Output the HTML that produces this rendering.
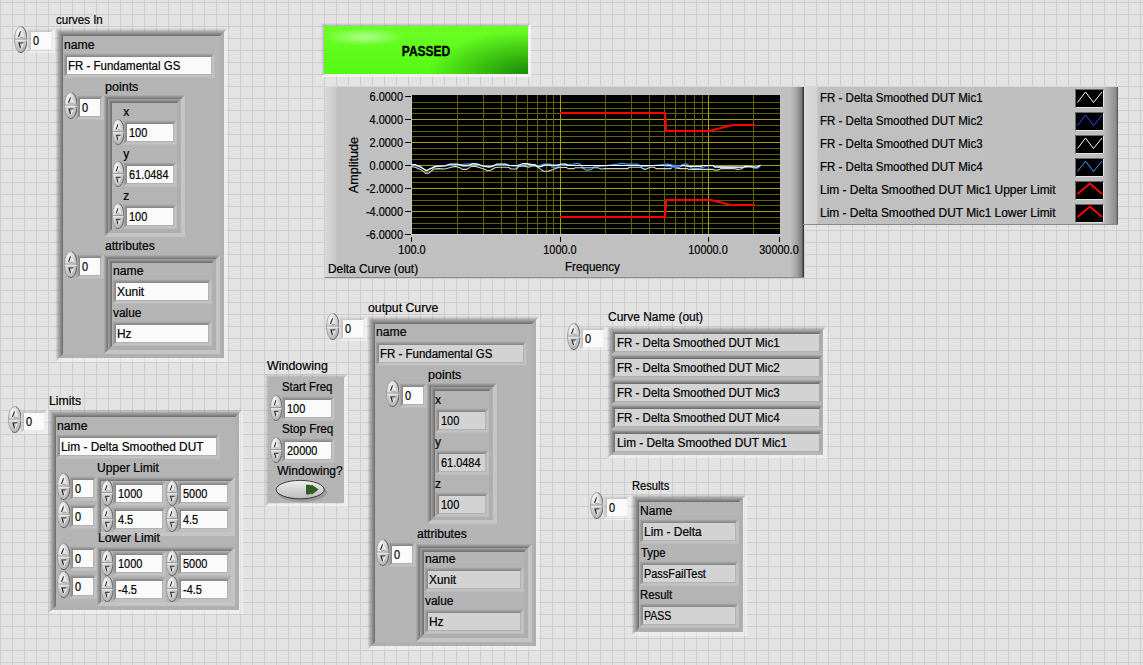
<!DOCTYPE html><html><head><meta charset="utf-8"><style>
html,body{margin:0;padding:0}
body{width:1143px;height:665px;overflow:hidden;position:relative;background-color:#e3e3e3;
background-image:linear-gradient(to right,#cdcdcd 1px,transparent 1px),linear-gradient(to bottom,#cdcdcd 1px,transparent 1px);
background-size:12px 12px;background-position:0 2px;font-family:"Liberation Sans",sans-serif;}
.a{position:absolute;box-sizing:border-box}
.b{position:absolute;left:0;top:0;right:0;bottom:0;border:1px solid transparent;box-sizing:border-box}
.f{position:absolute;left:0;top:0;right:0;bottom:0}
.t{position:absolute;font-size:12px;line-height:14px;white-space:pre;color:#000;-webkit-text-stroke:0.2px #000}
</style></head><body>
<svg width="0" height="0" style="position:absolute"><defs>
<radialGradient id="sg" cx="0.32" cy="0.22" r="0.9"><stop offset="0" stop-color="#f8f8f8"/><stop offset="0.35" stop-color="#dadada"/><stop offset="0.8" stop-color="#bcbcbc"/><stop offset="1" stop-color="#a0a0a0"/></radialGradient>
<linearGradient id="so" x1="0" y1="0" x2="1" y2="1"><stop offset="0" stop-color="#b0b0b0"/><stop offset="0.5" stop-color="#707070"/><stop offset="1" stop-color="#1a1a1a"/></linearGradient>
<g id="spin"><ellipse cx="6" cy="13" rx="5.6" ry="12.6" fill="url(#sg)" stroke="#8c8c8c" stroke-width="0.6"/>
<polyline points="7.45,0.83 7.92,1.16 8.37,1.58 8.80,2.09 9.21,2.68 9.60,3.35 9.96,4.09 10.29,4.90 10.59,5.77 10.85,6.70 11.08,7.68 11.26,8.69 11.41,9.74 11.51,10.81 11.58,11.90 11.60,13.00 11.58,14.10 11.51,15.19 11.41,16.26 11.26,17.31 11.08,18.32 10.85,19.30 10.59,20.23 10.29,21.10 9.96,21.91 9.60,22.65 9.21,23.32 8.80,23.91 8.37,24.42 7.92,24.84 7.45,25.17 6.97,25.41 6.49,25.55 6.00,25.60 5.51,25.55 5.03,25.41 4.55,25.17 4.08,24.84 3.63,24.42 3.20,23.91" fill="none" stroke="#3a3a3a" stroke-width="0.85" stroke-opacity="0.85" stroke-dasharray="1.5 0.6"/>
<path d="M0.6 12.6H11.4" stroke="#8e8e8e" stroke-width="0.9"/><path d="M0.8 13.7H11.2" stroke="#ececec" stroke-width="0.9"/>
<path d="M4 10.4L5.9 5" stroke="#1a1a1a" stroke-width="0.95"/><path d="M6.1 5.2L8.4 10.4" stroke="#f2f2f2" stroke-width="0.9"/><path d="M4.6 11H8.2" stroke="#9a9a9a" stroke-width="0.7"/>
<path d="M3.8 16.3H8.3" stroke="#1a1a1a" stroke-width="0.9"/><path d="M4.5 16.6L5.8 21.4" stroke="#1a1a1a" stroke-width="0.95"/><path d="M8.2 16.9L6.2 21.6" stroke="#f2f2f2" stroke-width="0.9"/></g>
</defs></svg>

<div class="t" style="left:55.5px;top:13.0px;transform:scaleX(0.96);transform-origin:left center;">curves In</div>
<svg class="a" style="left:13.5px;top:26px;z-index:2" width="13.5" height="27" viewBox="0 0 12 26" preserveAspectRatio="none"><use href="#spin"/></svg>
<div class="a" style="left:27px;top:28px;width:28px;height:25px"><div class="b" style="border-color:rgba(0,0,0,0.0) rgba(255,255,255,0.42) rgba(255,255,255,0.3) rgba(0,0,0,0.02)"><div class="b" style="border-color:rgba(0,0,0,0.04) rgba(255,255,255,0.42) rgba(255,255,255,0.3) rgba(0,0,0,0.06)"><div class="b" style="border-color:rgba(0,0,0,0.08) rgba(255,255,255,0.42) rgba(255,255,255,0.3) rgba(0,0,0,0.1)"><div class="b" style="border-color:rgba(0,0,0,0.12) rgba(255,255,255,0.42) rgba(255,255,255,0.3) rgba(0,0,0,0.14)"><div class="f" style="background:#fafafa"></div></div></div></div></div></div>
<div class="t" style="left:32.9px;top:33.8px;transform:scaleX(0.91);transform-origin:left center;">0</div>
<div class="a" style="left:55px;top:28px;width:173px;height:334px"><div class="b" style="border-color:rgba(0,0,0,0.02) rgba(255,255,255,0.36) rgba(255,255,255,0.36) rgba(0,0,0,0.02)"><div class="b" style="border-color:rgba(0,0,0,0.09) rgba(255,255,255,0.36) rgba(255,255,255,0.36) rgba(0,0,0,0.09)"><div class="b" style="border-color:rgba(0,0,0,0.17) rgba(255,255,255,0.36) rgba(255,255,255,0.36) rgba(0,0,0,0.17)"><div class="b" style="border-color:rgba(0,0,0,0.25) rgba(255,255,255,0.36) rgba(255,255,255,0.36) rgba(0,0,0,0.25)"><div class="b" style="background:#b4b4b4;border-color:rgba(0,0,0,.12) rgba(0,0,0,0.025) rgba(0,0,0,0.025) rgba(0,0,0,.12)"><div class="b" style="border-color:rgba(0,0,0,.2) rgba(0,0,0,0.025) rgba(0,0,0,0.025) rgba(0,0,0,.2)"><div class="b" style="border-color:rgba(0,0,0,.28) rgba(0,0,0,0.025) rgba(0,0,0,0.025) rgba(0,0,0,.28)"><div class="b" style="border-color:rgba(0,0,0,.37) rgba(0,0,0,0.025) rgba(0,0,0,0.025) rgba(0,0,0,.37)"><div class="f" style="background:#b4b4b4"></div></div></div></div></div></div></div></div></div></div>
<div class="t" style="left:63.7px;top:37.8px;transform:scaleX(1.016);transform-origin:left center;">name</div>
<div class="a" style="left:63px;top:53px;width:152px;height:25px"><div class="b" style="border-color:#b0b0b0 #bcbcbc #bcbcbc #b0b0b0"><div class="b" style="border-color:#a2a2a2 #c2c2c2 #c2c2c2 #a2a2a2"><div class="b" style="border-color:#959595 #c0c0c0 #c0c0c0 #959595"><div class="b" style="border-color:#898989 #b2b2b2 #b2b2b2 #898989"><div class="f" style="background:#fafafa"></div></div></div></div></div></div>
<div class="t" style="left:68.3px;top:58.8px;transform:scaleX(0.957);transform-origin:left center;">FR - Fundamental GS</div>
<div class="t" style="left:104.7px;top:79.8px;transform:scaleX(1.042);transform-origin:left center;">points</div>
<svg class="a" style="left:63.5px;top:92px;z-index:2" width="13.5" height="27" viewBox="0 0 12 26" preserveAspectRatio="none"><use href="#spin"/></svg>
<div class="a" style="left:76px;top:95px;width:28px;height:25px"><div class="b" style="border-color:#b0b0b0 #bcbcbc #bcbcbc #b0b0b0"><div class="b" style="border-color:#a2a2a2 #c2c2c2 #c2c2c2 #a2a2a2"><div class="b" style="border-color:#959595 #c0c0c0 #c0c0c0 #959595"><div class="b" style="border-color:#898989 #b2b2b2 #b2b2b2 #898989"><div class="f" style="background:#fafafa"></div></div></div></div></div></div>
<div class="t" style="left:81.9px;top:100.8px;transform:scaleX(0.91);transform-origin:left center;">0</div>
<div class="a" style="left:104px;top:95px;width:81px;height:142px"><div class="b" style="border-color:rgba(0,0,0,0.06) rgba(255,255,255,0.22) rgba(255,255,255,0.22) rgba(0,0,0,0.06)"><div class="b" style="border-color:rgba(0,0,0,0.14) rgba(255,255,255,0.22) rgba(255,255,255,0.22) rgba(0,0,0,0.14)"><div class="b" style="border-color:rgba(0,0,0,0.23) rgba(255,255,255,0.22) rgba(255,255,255,0.22) rgba(0,0,0,0.23)"><div class="b" style="border-color:rgba(0,0,0,0.32) rgba(255,255,255,0.22) rgba(255,255,255,0.22) rgba(0,0,0,0.32)"><div class="b" style="background:#b4b4b4;border-color:rgba(0,0,0,.12) rgba(0,0,0,0.025) rgba(0,0,0,0.025) rgba(0,0,0,.12)"><div class="b" style="border-color:rgba(0,0,0,.2) rgba(0,0,0,0.025) rgba(0,0,0,0.025) rgba(0,0,0,.2)"><div class="b" style="border-color:rgba(0,0,0,.28) rgba(0,0,0,0.025) rgba(0,0,0,0.025) rgba(0,0,0,.28)"><div class="b" style="border-color:rgba(0,0,0,.37) rgba(0,0,0,0.025) rgba(0,0,0,0.025) rgba(0,0,0,.37)"><div class="f" style="background:#b4b4b4"></div></div></div></div></div></div></div></div></div></div>
<div class="t" style="left:123.2px;top:104.8px;">x</div>
<svg class="a" style="left:111.8px;top:119px;z-index:2" width="12.4" height="26" viewBox="0 0 12 26" preserveAspectRatio="none"><use href="#spin"/></svg>
<div class="a" style="left:123px;top:120px;width:54px;height:25px"><div class="b" style="border-color:#b0b0b0 #bcbcbc #bcbcbc #b0b0b0"><div class="b" style="border-color:#a2a2a2 #c2c2c2 #c2c2c2 #a2a2a2"><div class="b" style="border-color:#959595 #c0c0c0 #c0c0c0 #959595"><div class="b" style="border-color:#898989 #b2b2b2 #b2b2b2 #898989"><div class="f" style="background:#fafafa"></div></div></div></div></div></div>
<div class="t" style="left:128.9px;top:125.8px;transform:scaleX(0.91);transform-origin:left center;">100</div>
<div class="t" style="left:123.2px;top:146.8px;">y</div>
<svg class="a" style="left:111.8px;top:161px;z-index:2" width="12.4" height="26" viewBox="0 0 12 26" preserveAspectRatio="none"><use href="#spin"/></svg>
<div class="a" style="left:123px;top:162px;width:54px;height:25px"><div class="b" style="border-color:#b0b0b0 #bcbcbc #bcbcbc #b0b0b0"><div class="b" style="border-color:#a2a2a2 #c2c2c2 #c2c2c2 #a2a2a2"><div class="b" style="border-color:#959595 #c0c0c0 #c0c0c0 #959595"><div class="b" style="border-color:#898989 #b2b2b2 #b2b2b2 #898989"><div class="f" style="background:#fafafa"></div></div></div></div></div></div>
<div class="t" style="left:128.9px;top:167.8px;transform:scaleX(0.91);transform-origin:left center;">61.0484</div>
<div class="t" style="left:123.2px;top:188.8px;">z</div>
<svg class="a" style="left:111.8px;top:203px;z-index:2" width="12.4" height="26" viewBox="0 0 12 26" preserveAspectRatio="none"><use href="#spin"/></svg>
<div class="a" style="left:123px;top:204px;width:54px;height:25px"><div class="b" style="border-color:#b0b0b0 #bcbcbc #bcbcbc #b0b0b0"><div class="b" style="border-color:#a2a2a2 #c2c2c2 #c2c2c2 #a2a2a2"><div class="b" style="border-color:#959595 #c0c0c0 #c0c0c0 #959595"><div class="b" style="border-color:#898989 #b2b2b2 #b2b2b2 #898989"><div class="f" style="background:#fafafa"></div></div></div></div></div></div>
<div class="t" style="left:128.9px;top:209.8px;transform:scaleX(0.91);transform-origin:left center;">100</div>
<div class="t" style="left:104.7px;top:239.4px;transform:scaleX(1.008);transform-origin:left center;">attributes</div>
<svg class="a" style="left:63.5px;top:251px;z-index:2" width="13.5" height="27" viewBox="0 0 12 26" preserveAspectRatio="none"><use href="#spin"/></svg>
<div class="a" style="left:76px;top:254px;width:28px;height:25px"><div class="b" style="border-color:#b0b0b0 #bcbcbc #bcbcbc #b0b0b0"><div class="b" style="border-color:#a2a2a2 #c2c2c2 #c2c2c2 #a2a2a2"><div class="b" style="border-color:#959595 #c0c0c0 #c0c0c0 #959595"><div class="b" style="border-color:#898989 #b2b2b2 #b2b2b2 #898989"><div class="f" style="background:#fafafa"></div></div></div></div></div></div>
<div class="t" style="left:81.9px;top:259.8px;transform:scaleX(0.91);transform-origin:left center;">0</div>
<div class="a" style="left:104px;top:255px;width:116px;height:99px"><div class="b" style="border-color:rgba(0,0,0,0.06) rgba(255,255,255,0.22) rgba(255,255,255,0.22) rgba(0,0,0,0.06)"><div class="b" style="border-color:rgba(0,0,0,0.14) rgba(255,255,255,0.22) rgba(255,255,255,0.22) rgba(0,0,0,0.14)"><div class="b" style="border-color:rgba(0,0,0,0.23) rgba(255,255,255,0.22) rgba(255,255,255,0.22) rgba(0,0,0,0.23)"><div class="b" style="border-color:rgba(0,0,0,0.32) rgba(255,255,255,0.22) rgba(255,255,255,0.22) rgba(0,0,0,0.32)"><div class="b" style="background:#b4b4b4;border-color:rgba(0,0,0,.12) rgba(0,0,0,0.025) rgba(0,0,0,0.025) rgba(0,0,0,.12)"><div class="b" style="border-color:rgba(0,0,0,.2) rgba(0,0,0,0.025) rgba(0,0,0,0.025) rgba(0,0,0,.2)"><div class="b" style="border-color:rgba(0,0,0,.28) rgba(0,0,0,0.025) rgba(0,0,0,0.025) rgba(0,0,0,.28)"><div class="b" style="border-color:rgba(0,0,0,.37) rgba(0,0,0,0.025) rgba(0,0,0,0.025) rgba(0,0,0,.37)"><div class="f" style="background:#b4b4b4"></div></div></div></div></div></div></div></div></div></div>
<div class="t" style="left:113.0px;top:264.1px;transform:scaleX(1.016);transform-origin:left center;">name</div>
<div class="a" style="left:112px;top:279px;width:100px;height:25px"><div class="b" style="border-color:#b0b0b0 #bcbcbc #bcbcbc #b0b0b0"><div class="b" style="border-color:#a2a2a2 #c2c2c2 #c2c2c2 #a2a2a2"><div class="b" style="border-color:#959595 #c0c0c0 #c0c0c0 #959595"><div class="b" style="border-color:#898989 #b2b2b2 #b2b2b2 #898989"><div class="f" style="background:#fafafa"></div></div></div></div></div></div>
<div class="t" style="left:117.3px;top:284.8px;transform:scaleX(0.993);transform-origin:left center;">Xunit</div>
<div class="t" style="left:112.6px;top:306.4px;transform:scaleX(0.993);transform-origin:left center;">value</div>
<div class="a" style="left:112px;top:321px;width:100px;height:25px"><div class="b" style="border-color:#b0b0b0 #bcbcbc #bcbcbc #b0b0b0"><div class="b" style="border-color:#a2a2a2 #c2c2c2 #c2c2c2 #a2a2a2"><div class="b" style="border-color:#959595 #c0c0c0 #c0c0c0 #959595"><div class="b" style="border-color:#898989 #b2b2b2 #b2b2b2 #898989"><div class="f" style="background:#fafafa"></div></div></div></div></div></div>
<div class="t" style="left:117.3px;top:326.8px;transform:scaleX(0.993);transform-origin:left center;">Hz</div>
<div class="t" style="left:48.8px;top:393.6px;transform:scaleX(1.023);transform-origin:left center;">Limits</div>
<svg class="a" style="left:7.5px;top:406px;z-index:2" width="13.5" height="27" viewBox="0 0 12 26" preserveAspectRatio="none"><use href="#spin"/></svg>
<div class="a" style="left:20px;top:409px;width:28px;height:25px"><div class="b" style="border-color:rgba(0,0,0,0.0) rgba(255,255,255,0.42) rgba(255,255,255,0.3) rgba(0,0,0,0.02)"><div class="b" style="border-color:rgba(0,0,0,0.04) rgba(255,255,255,0.42) rgba(255,255,255,0.3) rgba(0,0,0,0.06)"><div class="b" style="border-color:rgba(0,0,0,0.08) rgba(255,255,255,0.42) rgba(255,255,255,0.3) rgba(0,0,0,0.1)"><div class="b" style="border-color:rgba(0,0,0,0.12) rgba(255,255,255,0.42) rgba(255,255,255,0.3) rgba(0,0,0,0.14)"><div class="f" style="background:#fafafa"></div></div></div></div></div></div>
<div class="t" style="left:25.9px;top:414.8px;transform:scaleX(0.91);transform-origin:left center;">0</div>
<div class="a" style="left:48px;top:409px;width:195px;height:205px"><div class="b" style="border-color:rgba(0,0,0,0.02) rgba(255,255,255,0.36) rgba(255,255,255,0.36) rgba(0,0,0,0.02)"><div class="b" style="border-color:rgba(0,0,0,0.09) rgba(255,255,255,0.36) rgba(255,255,255,0.36) rgba(0,0,0,0.09)"><div class="b" style="border-color:rgba(0,0,0,0.17) rgba(255,255,255,0.36) rgba(255,255,255,0.36) rgba(0,0,0,0.17)"><div class="b" style="border-color:rgba(0,0,0,0.25) rgba(255,255,255,0.36) rgba(255,255,255,0.36) rgba(0,0,0,0.25)"><div class="b" style="background:#b4b4b4;border-color:rgba(0,0,0,.12) rgba(0,0,0,0.025) rgba(0,0,0,0.025) rgba(0,0,0,.12)"><div class="b" style="border-color:rgba(0,0,0,.2) rgba(0,0,0,0.025) rgba(0,0,0,0.025) rgba(0,0,0,.2)"><div class="b" style="border-color:rgba(0,0,0,.28) rgba(0,0,0,0.025) rgba(0,0,0,0.025) rgba(0,0,0,.28)"><div class="b" style="border-color:rgba(0,0,0,.37) rgba(0,0,0,0.025) rgba(0,0,0,0.025) rgba(0,0,0,.37)"><div class="f" style="background:#b4b4b4"></div></div></div></div></div></div></div></div></div></div>
<div class="t" style="left:57.0px;top:418.8px;transform:scaleX(1.016);transform-origin:left center;">name</div>
<div class="a" style="left:56px;top:434px;width:164px;height:25px"><div class="b" style="border-color:#b0b0b0 #bcbcbc #bcbcbc #b0b0b0"><div class="b" style="border-color:#a2a2a2 #c2c2c2 #c2c2c2 #a2a2a2"><div class="b" style="border-color:#959595 #c0c0c0 #c0c0c0 #959595"><div class="b" style="border-color:#898989 #b2b2b2 #b2b2b2 #898989"><div class="f" style="background:#fafafa"></div></div></div></div></div></div>
<div class="t" style="left:61.3px;top:439.8px;transform:scaleX(0.989);transform-origin:left center;">Lim - Delta Smoothed DUT</div>
<div class="t" style="left:97.4px;top:460.9px;transform:scaleX(1.007);transform-origin:left center;">Upper Limit</div>
<svg class="a" style="left:56.5px;top:473px;z-index:2" width="13.5" height="27" viewBox="0 0 12 26" preserveAspectRatio="none"><use href="#spin"/></svg>
<div class="a" style="left:69px;top:476px;width:28px;height:25px"><div class="b" style="border-color:#b0b0b0 #bcbcbc #bcbcbc #b0b0b0"><div class="b" style="border-color:#a2a2a2 #c2c2c2 #c2c2c2 #a2a2a2"><div class="b" style="border-color:#959595 #c0c0c0 #c0c0c0 #959595"><div class="b" style="border-color:#898989 #b2b2b2 #b2b2b2 #898989"><div class="f" style="background:#fafafa"></div></div></div></div></div></div>
<div class="t" style="left:74.9px;top:481.8px;transform:scaleX(0.91);transform-origin:left center;">0</div>
<svg class="a" style="left:56.5px;top:501px;z-index:2" width="13.5" height="27" viewBox="0 0 12 26" preserveAspectRatio="none"><use href="#spin"/></svg>
<div class="a" style="left:69px;top:504px;width:28px;height:25px"><div class="b" style="border-color:#b0b0b0 #bcbcbc #bcbcbc #b0b0b0"><div class="b" style="border-color:#a2a2a2 #c2c2c2 #c2c2c2 #a2a2a2"><div class="b" style="border-color:#959595 #c0c0c0 #c0c0c0 #959595"><div class="b" style="border-color:#898989 #b2b2b2 #b2b2b2 #898989"><div class="f" style="background:#fafafa"></div></div></div></div></div></div>
<div class="t" style="left:74.9px;top:509.8px;transform:scaleX(0.91);transform-origin:left center;">0</div>
<div class="a" style="left:97px;top:477px;width:138px;height:59px"><div class="b" style="border-color:rgba(0,0,0,0.06) rgba(255,255,255,0.22) rgba(255,255,255,0.22) rgba(0,0,0,0.06)"><div class="b" style="border-color:rgba(0,0,0,0.14) rgba(255,255,255,0.22) rgba(255,255,255,0.22) rgba(0,0,0,0.14)"><div class="b" style="border-color:rgba(0,0,0,0.23) rgba(255,255,255,0.22) rgba(255,255,255,0.22) rgba(0,0,0,0.23)"><div class="b" style="border-color:rgba(0,0,0,0.32) rgba(255,255,255,0.22) rgba(255,255,255,0.22) rgba(0,0,0,0.32)"><div class="f" style="background:#b4b4b4"></div></div></div></div></div></div>
<svg class="a" style="left:100.8px;top:480px;z-index:2" width="12.4" height="26" viewBox="0 0 12 26" preserveAspectRatio="none"><use href="#spin"/></svg>
<div class="a" style="left:112px;top:481px;width:54px;height:25px"><div class="b" style="border-color:#b0b0b0 #bcbcbc #bcbcbc #b0b0b0"><div class="b" style="border-color:#a2a2a2 #c2c2c2 #c2c2c2 #a2a2a2"><div class="b" style="border-color:#959595 #c0c0c0 #c0c0c0 #959595"><div class="b" style="border-color:#898989 #b2b2b2 #b2b2b2 #898989"><div class="f" style="background:#fafafa"></div></div></div></div></div></div>
<div class="t" style="left:117.9px;top:486.8px;transform:scaleX(0.91);transform-origin:left center;">1000</div>
<svg class="a" style="left:165.8px;top:480px;z-index:2" width="12.4" height="26" viewBox="0 0 12 26" preserveAspectRatio="none"><use href="#spin"/></svg>
<div class="a" style="left:177px;top:481px;width:54px;height:25px"><div class="b" style="border-color:#b0b0b0 #bcbcbc #bcbcbc #b0b0b0"><div class="b" style="border-color:#a2a2a2 #c2c2c2 #c2c2c2 #a2a2a2"><div class="b" style="border-color:#959595 #c0c0c0 #c0c0c0 #959595"><div class="b" style="border-color:#898989 #b2b2b2 #b2b2b2 #898989"><div class="f" style="background:#fafafa"></div></div></div></div></div></div>
<div class="t" style="left:182.9px;top:486.8px;transform:scaleX(0.91);transform-origin:left center;">5000</div>
<svg class="a" style="left:100.8px;top:506px;z-index:2" width="12.4" height="26" viewBox="0 0 12 26" preserveAspectRatio="none"><use href="#spin"/></svg>
<div class="a" style="left:112px;top:507px;width:54px;height:25px"><div class="b" style="border-color:#b0b0b0 #bcbcbc #bcbcbc #b0b0b0"><div class="b" style="border-color:#a2a2a2 #c2c2c2 #c2c2c2 #a2a2a2"><div class="b" style="border-color:#959595 #c0c0c0 #c0c0c0 #959595"><div class="b" style="border-color:#898989 #b2b2b2 #b2b2b2 #898989"><div class="f" style="background:#fafafa"></div></div></div></div></div></div>
<div class="t" style="left:117.9px;top:512.8px;transform:scaleX(0.91);transform-origin:left center;">4.5</div>
<svg class="a" style="left:165.8px;top:506px;z-index:2" width="12.4" height="26" viewBox="0 0 12 26" preserveAspectRatio="none"><use href="#spin"/></svg>
<div class="a" style="left:177px;top:507px;width:54px;height:25px"><div class="b" style="border-color:#b0b0b0 #bcbcbc #bcbcbc #b0b0b0"><div class="b" style="border-color:#a2a2a2 #c2c2c2 #c2c2c2 #a2a2a2"><div class="b" style="border-color:#959595 #c0c0c0 #c0c0c0 #959595"><div class="b" style="border-color:#898989 #b2b2b2 #b2b2b2 #898989"><div class="f" style="background:#fafafa"></div></div></div></div></div></div>
<div class="t" style="left:182.9px;top:512.8px;transform:scaleX(0.91);transform-origin:left center;">4.5</div>
<div class="t" style="left:98.0px;top:530.7px;transform:scaleX(1.008);transform-origin:left center;">Lower Limit</div>
<svg class="a" style="left:56.5px;top:543px;z-index:2" width="13.5" height="27" viewBox="0 0 12 26" preserveAspectRatio="none"><use href="#spin"/></svg>
<div class="a" style="left:69px;top:546px;width:28px;height:25px"><div class="b" style="border-color:#b0b0b0 #bcbcbc #bcbcbc #b0b0b0"><div class="b" style="border-color:#a2a2a2 #c2c2c2 #c2c2c2 #a2a2a2"><div class="b" style="border-color:#959595 #c0c0c0 #c0c0c0 #959595"><div class="b" style="border-color:#898989 #b2b2b2 #b2b2b2 #898989"><div class="f" style="background:#fafafa"></div></div></div></div></div></div>
<div class="t" style="left:74.9px;top:551.8px;transform:scaleX(0.91);transform-origin:left center;">0</div>
<svg class="a" style="left:56.5px;top:571px;z-index:2" width="13.5" height="27" viewBox="0 0 12 26" preserveAspectRatio="none"><use href="#spin"/></svg>
<div class="a" style="left:69px;top:574px;width:28px;height:25px"><div class="b" style="border-color:#b0b0b0 #bcbcbc #bcbcbc #b0b0b0"><div class="b" style="border-color:#a2a2a2 #c2c2c2 #c2c2c2 #a2a2a2"><div class="b" style="border-color:#959595 #c0c0c0 #c0c0c0 #959595"><div class="b" style="border-color:#898989 #b2b2b2 #b2b2b2 #898989"><div class="f" style="background:#fafafa"></div></div></div></div></div></div>
<div class="t" style="left:74.9px;top:579.8px;transform:scaleX(0.91);transform-origin:left center;">0</div>
<div class="a" style="left:97px;top:547px;width:138px;height:59px"><div class="b" style="border-color:rgba(0,0,0,0.06) rgba(255,255,255,0.22) rgba(255,255,255,0.22) rgba(0,0,0,0.06)"><div class="b" style="border-color:rgba(0,0,0,0.14) rgba(255,255,255,0.22) rgba(255,255,255,0.22) rgba(0,0,0,0.14)"><div class="b" style="border-color:rgba(0,0,0,0.23) rgba(255,255,255,0.22) rgba(255,255,255,0.22) rgba(0,0,0,0.23)"><div class="b" style="border-color:rgba(0,0,0,0.32) rgba(255,255,255,0.22) rgba(255,255,255,0.22) rgba(0,0,0,0.32)"><div class="f" style="background:#b4b4b4"></div></div></div></div></div></div>
<svg class="a" style="left:100.8px;top:550px;z-index:2" width="12.4" height="26" viewBox="0 0 12 26" preserveAspectRatio="none"><use href="#spin"/></svg>
<div class="a" style="left:112px;top:551px;width:54px;height:25px"><div class="b" style="border-color:#b0b0b0 #bcbcbc #bcbcbc #b0b0b0"><div class="b" style="border-color:#a2a2a2 #c2c2c2 #c2c2c2 #a2a2a2"><div class="b" style="border-color:#959595 #c0c0c0 #c0c0c0 #959595"><div class="b" style="border-color:#898989 #b2b2b2 #b2b2b2 #898989"><div class="f" style="background:#fafafa"></div></div></div></div></div></div>
<div class="t" style="left:117.9px;top:556.8px;transform:scaleX(0.91);transform-origin:left center;">1000</div>
<svg class="a" style="left:165.8px;top:550px;z-index:2" width="12.4" height="26" viewBox="0 0 12 26" preserveAspectRatio="none"><use href="#spin"/></svg>
<div class="a" style="left:177px;top:551px;width:54px;height:25px"><div class="b" style="border-color:#b0b0b0 #bcbcbc #bcbcbc #b0b0b0"><div class="b" style="border-color:#a2a2a2 #c2c2c2 #c2c2c2 #a2a2a2"><div class="b" style="border-color:#959595 #c0c0c0 #c0c0c0 #959595"><div class="b" style="border-color:#898989 #b2b2b2 #b2b2b2 #898989"><div class="f" style="background:#fafafa"></div></div></div></div></div></div>
<div class="t" style="left:182.9px;top:556.8px;transform:scaleX(0.91);transform-origin:left center;">5000</div>
<svg class="a" style="left:100.8px;top:576px;z-index:2" width="12.4" height="26" viewBox="0 0 12 26" preserveAspectRatio="none"><use href="#spin"/></svg>
<div class="a" style="left:112px;top:577px;width:54px;height:25px"><div class="b" style="border-color:#b0b0b0 #bcbcbc #bcbcbc #b0b0b0"><div class="b" style="border-color:#a2a2a2 #c2c2c2 #c2c2c2 #a2a2a2"><div class="b" style="border-color:#959595 #c0c0c0 #c0c0c0 #959595"><div class="b" style="border-color:#898989 #b2b2b2 #b2b2b2 #898989"><div class="f" style="background:#fafafa"></div></div></div></div></div></div>
<div class="t" style="left:117.9px;top:582.8px;transform:scaleX(0.91);transform-origin:left center;">-4.5</div>
<svg class="a" style="left:165.8px;top:576px;z-index:2" width="12.4" height="26" viewBox="0 0 12 26" preserveAspectRatio="none"><use href="#spin"/></svg>
<div class="a" style="left:177px;top:577px;width:54px;height:25px"><div class="b" style="border-color:#b0b0b0 #bcbcbc #bcbcbc #b0b0b0"><div class="b" style="border-color:#a2a2a2 #c2c2c2 #c2c2c2 #a2a2a2"><div class="b" style="border-color:#959595 #c0c0c0 #c0c0c0 #959595"><div class="b" style="border-color:#898989 #b2b2b2 #b2b2b2 #898989"><div class="f" style="background:#fafafa"></div></div></div></div></div></div>
<div class="t" style="left:182.9px;top:582.8px;transform:scaleX(0.91);transform-origin:left center;">-4.5</div>
<div class="t" style="left:266.6px;top:358.7px;transform:scaleX(1.036);transform-origin:left center;">Windowing</div>
<div class="a" style="left:265px;top:374px;width:83px;height:133px"><div class="b" style="border-color:rgba(0,0,0,0.05) rgba(255,255,255,0.42) rgba(255,255,255,0.4) rgba(0,0,0,0.05)"><div class="b" style="border-color:rgba(0,0,0,0.1) rgba(255,255,255,0.42) rgba(255,255,255,0.4) rgba(0,0,0,0.1)"><div class="b" style="border-color:rgba(0,0,0,0.16) rgba(255,255,255,0.42) rgba(255,255,255,0.4) rgba(0,0,0,0.16)"><div class="b" style="border-color:rgba(0,0,0,0.2) rgba(255,255,255,0.42) rgba(0,0,0,0) rgba(0,0,0,0.2)"><div class="f" style="background:#b4b4b4"></div></div></div></div></div></div>
<div class="t" style="left:281.5px;top:379.8px;transform:scaleX(0.944);transform-origin:left center;">Start Freq</div>
<svg class="a" style="left:269.8px;top:395px;z-index:2" width="12.4" height="26" viewBox="0 0 12 26" preserveAspectRatio="none"><use href="#spin"/></svg>
<div class="a" style="left:281px;top:396px;width:54px;height:25px"><div class="b" style="border-color:#b0b0b0 #bcbcbc #bcbcbc #b0b0b0"><div class="b" style="border-color:#a2a2a2 #c2c2c2 #c2c2c2 #a2a2a2"><div class="b" style="border-color:#959595 #c0c0c0 #c0c0c0 #959595"><div class="b" style="border-color:#898989 #b2b2b2 #b2b2b2 #898989"><div class="f" style="background:#fafafa"></div></div></div></div></div></div>
<div class="t" style="left:286.9px;top:401.8px;transform:scaleX(0.91);transform-origin:left center;">100</div>
<div class="t" style="left:281.5px;top:421.9px;transform:scaleX(0.973);transform-origin:left center;">Stop Freq</div>
<svg class="a" style="left:269.8px;top:437px;z-index:2" width="12.4" height="26" viewBox="0 0 12 26" preserveAspectRatio="none"><use href="#spin"/></svg>
<div class="a" style="left:281px;top:438px;width:54px;height:25px"><div class="b" style="border-color:#b0b0b0 #bcbcbc #bcbcbc #b0b0b0"><div class="b" style="border-color:#a2a2a2 #c2c2c2 #c2c2c2 #a2a2a2"><div class="b" style="border-color:#959595 #c0c0c0 #c0c0c0 #959595"><div class="b" style="border-color:#898989 #b2b2b2 #b2b2b2 #898989"><div class="f" style="background:#fafafa"></div></div></div></div></div></div>
<div class="t" style="left:286.9px;top:443.8px;transform:scaleX(0.91);transform-origin:left center;">20000</div>
<div class="t" style="left:277.3px;top:464.1px;transform:scaleX(1.0);transform-origin:left center;">Windowing?</div>
<svg class="a" style="left:274px;top:478px" width="56" height="26" viewBox="0 0 56 26">
<defs><linearGradient id="tg" x1="0" y1="0" x2="0" y2="1"><stop offset="0" stop-color="#f0f0f0"/><stop offset="0.5" stop-color="#d4d4d4"/><stop offset="1" stop-color="#bcbcbc"/></linearGradient></defs>
<ellipse cx="28" cy="14" rx="25" ry="10" fill="rgba(0,0,0,.15)"/>
<ellipse cx="26.2" cy="11.6" rx="24" ry="9.2" fill="url(#tg)" stroke="#2a2a2a" stroke-width="0.9"/>
<path d="M32 6.8L35.5 6.8L36.6 7.6L38 6.8L44.6 11.6L38 16.4L36.6 15.6L35.5 16.4L32 16.4Z" fill="#2f5f1e"/></svg>
<div class="t" style="left:367.5px;top:301.1px;transform:scaleX(1.022);transform-origin:left center;">output Curve</div>
<svg class="a" style="left:325.5px;top:313px;z-index:2" width="13.5" height="27" viewBox="0 0 12 26" preserveAspectRatio="none"><use href="#spin"/></svg>
<div class="a" style="left:339px;top:316px;width:28px;height:25px"><div class="b" style="border-color:rgba(0,0,0,0.0) rgba(255,255,255,0.42) rgba(255,255,255,0.3) rgba(0,0,0,0.02)"><div class="b" style="border-color:rgba(0,0,0,0.04) rgba(255,255,255,0.42) rgba(255,255,255,0.3) rgba(0,0,0,0.06)"><div class="b" style="border-color:rgba(0,0,0,0.08) rgba(255,255,255,0.42) rgba(255,255,255,0.3) rgba(0,0,0,0.1)"><div class="b" style="border-color:rgba(0,0,0,0.12) rgba(255,255,255,0.42) rgba(255,255,255,0.3) rgba(0,0,0,0.14)"><div class="f" style="background:#fafafa"></div></div></div></div></div></div>
<div class="t" style="left:344.9px;top:321.8px;transform:scaleX(0.91);transform-origin:left center;">0</div>
<div class="a" style="left:367px;top:316px;width:173px;height:334px"><div class="b" style="border-color:rgba(0,0,0,0.02) rgba(255,255,255,0.36) rgba(255,255,255,0.36) rgba(0,0,0,0.02)"><div class="b" style="border-color:rgba(0,0,0,0.09) rgba(255,255,255,0.36) rgba(255,255,255,0.36) rgba(0,0,0,0.09)"><div class="b" style="border-color:rgba(0,0,0,0.17) rgba(255,255,255,0.36) rgba(255,255,255,0.36) rgba(0,0,0,0.17)"><div class="b" style="border-color:rgba(0,0,0,0.25) rgba(255,255,255,0.36) rgba(255,255,255,0.36) rgba(0,0,0,0.25)"><div class="b" style="background:#b4b4b4;border-color:rgba(0,0,0,.12) rgba(0,0,0,0.025) rgba(0,0,0,0.025) rgba(0,0,0,.12)"><div class="b" style="border-color:rgba(0,0,0,.2) rgba(0,0,0,0.025) rgba(0,0,0,0.025) rgba(0,0,0,.2)"><div class="b" style="border-color:rgba(0,0,0,.28) rgba(0,0,0,0.025) rgba(0,0,0,0.025) rgba(0,0,0,.28)"><div class="b" style="border-color:rgba(0,0,0,.37) rgba(0,0,0,0.025) rgba(0,0,0,0.025) rgba(0,0,0,.37)"><div class="f" style="background:#b4b4b4"></div></div></div></div></div></div></div></div></div></div>
<div class="t" style="left:375.7px;top:325.4px;transform:scaleX(1.016);transform-origin:left center;">name</div>
<div class="a" style="left:375px;top:341px;width:152px;height:25px"><div class="b" style="border-color:#b0b0b0 #bcbcbc #bcbcbc #b0b0b0"><div class="b" style="border-color:#a2a2a2 #c2c2c2 #c2c2c2 #a2a2a2"><div class="b" style="border-color:#959595 #c0c0c0 #c0c0c0 #959595"><div class="b" style="border-color:#898989 #b2b2b2 #b2b2b2 #898989"><div class="f" style="background:#d3d3d3"></div></div></div></div></div></div>
<div class="t" style="left:380.3px;top:346.8px;transform:scaleX(0.957);transform-origin:left center;">FR - Fundamental GS</div>
<div class="t" style="left:427.9px;top:368.3px;transform:scaleX(1.042);transform-origin:left center;">points</div>
<svg class="a" style="left:385.5px;top:380px;z-index:2" width="13.5" height="27" viewBox="0 0 12 26" preserveAspectRatio="none"><use href="#spin"/></svg>
<div class="a" style="left:399px;top:383px;width:28px;height:25px"><div class="b" style="border-color:#b0b0b0 #bcbcbc #bcbcbc #b0b0b0"><div class="b" style="border-color:#a2a2a2 #c2c2c2 #c2c2c2 #a2a2a2"><div class="b" style="border-color:#959595 #c0c0c0 #c0c0c0 #959595"><div class="b" style="border-color:#898989 #b2b2b2 #b2b2b2 #898989"><div class="f" style="background:#fafafa"></div></div></div></div></div></div>
<div class="t" style="left:404.9px;top:388.8px;transform:scaleX(0.91);transform-origin:left center;">0</div>
<div class="a" style="left:427px;top:383px;width:70px;height:141px"><div class="b" style="border-color:rgba(0,0,0,0.06) rgba(255,255,255,0.22) rgba(255,255,255,0.22) rgba(0,0,0,0.06)"><div class="b" style="border-color:rgba(0,0,0,0.14) rgba(255,255,255,0.22) rgba(255,255,255,0.22) rgba(0,0,0,0.14)"><div class="b" style="border-color:rgba(0,0,0,0.23) rgba(255,255,255,0.22) rgba(255,255,255,0.22) rgba(0,0,0,0.23)"><div class="b" style="border-color:rgba(0,0,0,0.32) rgba(255,255,255,0.22) rgba(255,255,255,0.22) rgba(0,0,0,0.32)"><div class="b" style="background:#b4b4b4;border-color:rgba(0,0,0,.12) rgba(0,0,0,0.025) rgba(0,0,0,0.025) rgba(0,0,0,.12)"><div class="b" style="border-color:rgba(0,0,0,.2) rgba(0,0,0,0.025) rgba(0,0,0,0.025) rgba(0,0,0,.2)"><div class="b" style="border-color:rgba(0,0,0,.28) rgba(0,0,0,0.025) rgba(0,0,0,0.025) rgba(0,0,0,.28)"><div class="b" style="border-color:rgba(0,0,0,.37) rgba(0,0,0,0.025) rgba(0,0,0,0.025) rgba(0,0,0,.37)"><div class="f" style="background:#b4b4b4"></div></div></div></div></div></div></div></div></div></div>
<div class="t" style="left:435.0px;top:393.1px;">x</div>
<div class="a" style="left:435px;top:408px;width:54px;height:25px"><div class="b" style="border-color:#b0b0b0 #bcbcbc #bcbcbc #b0b0b0"><div class="b" style="border-color:#a2a2a2 #c2c2c2 #c2c2c2 #a2a2a2"><div class="b" style="border-color:#959595 #c0c0c0 #c0c0c0 #959595"><div class="b" style="border-color:#898989 #b2b2b2 #b2b2b2 #898989"><div class="f" style="background:#d3d3d3"></div></div></div></div></div></div>
<div class="t" style="left:440.9px;top:413.8px;transform:scaleX(0.91);transform-origin:left center;">100</div>
<div class="t" style="left:435.0px;top:434.8px;">y</div>
<div class="a" style="left:435px;top:450px;width:54px;height:25px"><div class="b" style="border-color:#b0b0b0 #bcbcbc #bcbcbc #b0b0b0"><div class="b" style="border-color:#a2a2a2 #c2c2c2 #c2c2c2 #a2a2a2"><div class="b" style="border-color:#959595 #c0c0c0 #c0c0c0 #959595"><div class="b" style="border-color:#898989 #b2b2b2 #b2b2b2 #898989"><div class="f" style="background:#d3d3d3"></div></div></div></div></div></div>
<div class="t" style="left:440.9px;top:455.8px;transform:scaleX(0.91);transform-origin:left center;">61.0484</div>
<div class="t" style="left:435.0px;top:476.7px;">z</div>
<div class="a" style="left:435px;top:492px;width:54px;height:25px"><div class="b" style="border-color:#b0b0b0 #bcbcbc #bcbcbc #b0b0b0"><div class="b" style="border-color:#a2a2a2 #c2c2c2 #c2c2c2 #a2a2a2"><div class="b" style="border-color:#959595 #c0c0c0 #c0c0c0 #959595"><div class="b" style="border-color:#898989 #b2b2b2 #b2b2b2 #898989"><div class="f" style="background:#d3d3d3"></div></div></div></div></div></div>
<div class="t" style="left:440.9px;top:497.8px;transform:scaleX(0.91);transform-origin:left center;">100</div>
<div class="t" style="left:416.5px;top:526.7px;transform:scaleX(1.008);transform-origin:left center;">attributes</div>
<svg class="a" style="left:375.5px;top:539px;z-index:2" width="13.5" height="27" viewBox="0 0 12 26" preserveAspectRatio="none"><use href="#spin"/></svg>
<div class="a" style="left:388px;top:542px;width:28px;height:25px"><div class="b" style="border-color:#b0b0b0 #bcbcbc #bcbcbc #b0b0b0"><div class="b" style="border-color:#a2a2a2 #c2c2c2 #c2c2c2 #a2a2a2"><div class="b" style="border-color:#959595 #c0c0c0 #c0c0c0 #959595"><div class="b" style="border-color:#898989 #b2b2b2 #b2b2b2 #898989"><div class="f" style="background:#fafafa"></div></div></div></div></div></div>
<div class="t" style="left:393.9px;top:547.8px;transform:scaleX(0.91);transform-origin:left center;">0</div>
<div class="a" style="left:416px;top:544px;width:116px;height:98px"><div class="b" style="border-color:rgba(0,0,0,0.06) rgba(255,255,255,0.22) rgba(255,255,255,0.22) rgba(0,0,0,0.06)"><div class="b" style="border-color:rgba(0,0,0,0.14) rgba(255,255,255,0.22) rgba(255,255,255,0.22) rgba(0,0,0,0.14)"><div class="b" style="border-color:rgba(0,0,0,0.23) rgba(255,255,255,0.22) rgba(255,255,255,0.22) rgba(0,0,0,0.23)"><div class="b" style="border-color:rgba(0,0,0,0.32) rgba(255,255,255,0.22) rgba(255,255,255,0.22) rgba(0,0,0,0.32)"><div class="b" style="background:#b4b4b4;border-color:rgba(0,0,0,.12) rgba(0,0,0,0.025) rgba(0,0,0,0.025) rgba(0,0,0,.12)"><div class="b" style="border-color:rgba(0,0,0,.2) rgba(0,0,0,0.025) rgba(0,0,0,0.025) rgba(0,0,0,.2)"><div class="b" style="border-color:rgba(0,0,0,.28) rgba(0,0,0,0.025) rgba(0,0,0,0.025) rgba(0,0,0,.28)"><div class="b" style="border-color:rgba(0,0,0,.37) rgba(0,0,0,0.025) rgba(0,0,0,0.025) rgba(0,0,0,.37)"><div class="f" style="background:#b4b4b4"></div></div></div></div></div></div></div></div></div></div>
<div class="t" style="left:424.6px;top:551.8px;transform:scaleX(1.016);transform-origin:left center;">name</div>
<div class="a" style="left:424px;top:567px;width:100px;height:25px"><div class="b" style="border-color:#b0b0b0 #bcbcbc #bcbcbc #b0b0b0"><div class="b" style="border-color:#a2a2a2 #c2c2c2 #c2c2c2 #a2a2a2"><div class="b" style="border-color:#959595 #c0c0c0 #c0c0c0 #959595"><div class="b" style="border-color:#898989 #b2b2b2 #b2b2b2 #898989"><div class="f" style="background:#d3d3d3"></div></div></div></div></div></div>
<div class="t" style="left:429.3px;top:572.8px;transform:scaleX(0.993);transform-origin:left center;">Xunit</div>
<div class="t" style="left:424.6px;top:593.7px;transform:scaleX(0.993);transform-origin:left center;">value</div>
<div class="a" style="left:424px;top:609px;width:100px;height:25px"><div class="b" style="border-color:#b0b0b0 #bcbcbc #bcbcbc #b0b0b0"><div class="b" style="border-color:#a2a2a2 #c2c2c2 #c2c2c2 #a2a2a2"><div class="b" style="border-color:#959595 #c0c0c0 #c0c0c0 #959595"><div class="b" style="border-color:#898989 #b2b2b2 #b2b2b2 #898989"><div class="f" style="background:#d3d3d3"></div></div></div></div></div></div>
<div class="t" style="left:429.3px;top:614.8px;transform:scaleX(0.993);transform-origin:left center;">Hz</div>
<div class="a" style="left:321px;top:23px;width:210px;height:54px"><div class="b" style="border-color:rgba(0,0,0,.04) rgba(255,255,255,0.6) rgba(255,255,255,0.6) rgba(0,0,0,.03)"><div class="b" style="border-color:rgba(0,0,0,.1) rgba(255,255,255,0.6) rgba(255,255,255,0.6) rgba(0,0,0,.08)"><div class="b" style="border-color:rgba(30,10,45,.2) rgba(255,255,255,0.6) rgba(255,255,255,0.6) rgba(30,10,45,.18)"><div class="f" style="background:radial-gradient(ellipse 40px 9px at 40px 11px,rgba(255,255,255,.5),rgba(255,255,255,0) 100%),radial-gradient(ellipse 100px 44px at 100% 100%,rgba(0,90,0,.7),rgba(0,90,0,0) 100%),linear-gradient(to bottom,#6aff24,#56f814)"></div></div></div></div></div>
<div class="t" style="left:323px;top:44.6px;width:206px;text-align:center;font-weight:bold;font-size:13.8px;transform:scaleX(0.87);-webkit-text-stroke:0.35px #000">PASSED</div>
<div class="a" style="left:325px;top:86px;width:479px;height:192px;background:linear-gradient(to right,#d8d8d8 0px,#c9c9c9 11px,#c0c0c0 12px,#c0c0c0 465px,#a8a8a8 471px,#787878 477px,#3c3c3c 478px);border-top:1px solid #d8d8d8;border-bottom:1px solid #8c8c8c"></div>
<svg class="a" style="left:411px;top:95px" width="369" height="140" shape-rendering="crispEdges"><rect width="369" height="140" fill="#000"/><line x1="0.5" x2="0.5" y1="0" y2="140" stroke="#c8c8c8"/><line x1="1" x2="369" y1="133.5" y2="133.5" stroke="#626200" stroke-width="1"/><line x1="1" x2="369" y1="128.5" y2="128.5" stroke="#626200" stroke-width="1"/><line x1="1" x2="369" y1="122.5" y2="122.5" stroke="#626200" stroke-width="1"/><line x1="1" x2="369" y1="116.5" y2="116.5" stroke="#a4a400" stroke-width="1"/><line x1="1" x2="369" y1="110.5" y2="110.5" stroke="#626200" stroke-width="1"/><line x1="1" x2="369" y1="105.5" y2="105.5" stroke="#626200" stroke-width="1"/><line x1="1" x2="369" y1="99.5" y2="99.5" stroke="#626200" stroke-width="1"/><line x1="1" x2="369" y1="93.5" y2="93.5" stroke="#a4a400" stroke-width="1"/><line x1="1" x2="369" y1="87.5" y2="87.5" stroke="#626200" stroke-width="1"/><line x1="1" x2="369" y1="82.5" y2="82.5" stroke="#626200" stroke-width="1"/><line x1="1" x2="369" y1="76.5" y2="76.5" stroke="#626200" stroke-width="1"/><line x1="1" x2="369" y1="70.5" y2="70.5" stroke="#a4a400" stroke-width="1"/><line x1="1" x2="369" y1="64.5" y2="64.5" stroke="#626200" stroke-width="1"/><line x1="1" x2="369" y1="59.5" y2="59.5" stroke="#626200" stroke-width="1"/><line x1="1" x2="369" y1="53.5" y2="53.5" stroke="#626200" stroke-width="1"/><line x1="1" x2="369" y1="47.5" y2="47.5" stroke="#a4a400" stroke-width="1"/><line x1="1" x2="369" y1="41.5" y2="41.5" stroke="#626200" stroke-width="1"/><line x1="1" x2="369" y1="36.5" y2="36.5" stroke="#626200" stroke-width="1"/><line x1="1" x2="369" y1="30.5" y2="30.5" stroke="#626200" stroke-width="1"/><line x1="1" x2="369" y1="24.5" y2="24.5" stroke="#a4a400" stroke-width="1"/><line x1="1" x2="369" y1="18.5" y2="18.5" stroke="#626200" stroke-width="1"/><line x1="1" x2="369" y1="13.5" y2="13.5" stroke="#626200" stroke-width="1"/><line x1="1" x2="369" y1="7.5" y2="7.5" stroke="#626200" stroke-width="1"/><line y1="0" y2="140" x1="46.5" x2="46.5" stroke="#626200" stroke-width="1"/><line y1="0" y2="140" x1="72.5" x2="72.5" stroke="#626200" stroke-width="1"/><line y1="0" y2="140" x1="90.5" x2="90.5" stroke="#626200" stroke-width="1"/><line y1="0" y2="140" x1="105.5" x2="105.5" stroke="#626200" stroke-width="1"/><line y1="0" y2="140" x1="116.5" x2="116.5" stroke="#626200" stroke-width="1"/><line y1="0" y2="140" x1="126.5" x2="126.5" stroke="#626200" stroke-width="1"/><line y1="0" y2="140" x1="135.5" x2="135.5" stroke="#626200" stroke-width="1"/><line y1="0" y2="140" x1="142.5" x2="142.5" stroke="#626200" stroke-width="1"/><line y1="0" y2="140" x1="149.5" x2="149.5" stroke="#a4a400" stroke-width="1"/><line y1="0" y2="140" x1="194.5" x2="194.5" stroke="#626200" stroke-width="1"/><line y1="0" y2="140" x1="220.5" x2="220.5" stroke="#626200" stroke-width="1"/><line y1="0" y2="140" x1="238.5" x2="238.5" stroke="#626200" stroke-width="1"/><line y1="0" y2="140" x1="253.5" x2="253.5" stroke="#626200" stroke-width="1"/><line y1="0" y2="140" x1="264.5" x2="264.5" stroke="#626200" stroke-width="1"/><line y1="0" y2="140" x1="274.5" x2="274.5" stroke="#626200" stroke-width="1"/><line y1="0" y2="140" x1="283.5" x2="283.5" stroke="#626200" stroke-width="1"/><line y1="0" y2="140" x1="291.5" x2="291.5" stroke="#626200" stroke-width="1"/><line y1="0" y2="140" x1="297.5" x2="297.5" stroke="#a4a400" stroke-width="1"/><line y1="0" y2="140" x1="342.5" x2="342.5" stroke="#626200" stroke-width="1"/><line x1="0" x2="369" y1="139.5" y2="139.5" stroke="#d0d0d0"/></svg>
<svg class="a" style="left:411px;top:95px" width="369" height="140"><polyline points="149.0,18.0 254.0,18.0 255.0,36.0 298.0,36.0 322.0,30.0 344.0,30.0" fill="none" stroke="#ff0000" stroke-width="2.2" stroke-opacity="1" stroke-linejoin="round"/><polyline points="149.0,122.0 254.0,122.0 255.0,105.0 300.0,105.0 320.0,110.0 344.0,110.0" fill="none" stroke="#ff0000" stroke-width="2.2" stroke-opacity="1" stroke-linejoin="round"/><polyline points="0.0,70.1 4.0,70.5 12.0,73.5 15.2,75.5 22.6,72.0 34.0,70.7 40.0,70.3 62.0,68.7 69.0,70.5 79.0,71.5 85.6,70.2 94.0,70.1 107.1,71.4 111.5,70.1 120.2,69.2 122.9,71.4 127.2,70.9 133.4,69.2 139.5,69.2 141.2,72.2 146.5,72.2 148.2,70.9 155.2,69.6 162.2,69.2 165.7,68.3 169.2,69.2 171.9,73.1 175.4,75.3 180.6,74.4 184.1,70.9 186.7,71.4 194.0,70.9 206.5,69.2 211.7,68.3 216.1,69.2 226.6,69.2 230.1,71.4 234.5,71.4 257.2,69.2 261.6,70.1 263.4,70.9 269.5,70.9 272.1,69.2 276.5,69.2 278.2,71.4 281.7,73.6 289.0,73.1 297.9,70.5 303.1,70.9 310.1,72.2 332.0,72.7 339.0,71.4 343.4,73.1 346.9,73.1 349.5,70.5" fill="none" stroke="#3a9bff" stroke-width="1.3" stroke-opacity="1" stroke-linejoin="round"/><polyline points="0.0,71.4 4.2,72.2 10.4,74.9 14.7,78.4 18.2,77.9 22.6,74.0 27.9,73.6 34.0,74.0 40.1,72.2 44.5,71.4 48.9,72.7 51.5,74.4 55.9,74.4 60.2,71.4 64.6,71.4 69.0,72.7 74.2,74.4 76.0,75.7 79.5,75.3 83.9,72.7 86.5,72.2 97.5,72.2 100.1,74.0 105.4,74.0 108.0,71.4 112.4,70.9 117.6,72.2 123.7,70.1 128.1,73.1 132.5,76.2 136.9,76.2 142.1,74.4 146.5,72.7 155.2,72.2 157.0,73.6 163.1,73.6 164.0,72.7 186.7,72.7 190.2,74.0 194.2,73.6 217.0,73.6 217.9,72.2 230.1,72.2 231.9,73.6 234.5,74.4 236.2,73.6 239.7,72.2 243.2,72.2 245.0,73.6 259.9,73.6 261.6,72.2 266.0,73.1 269.5,73.6 276.5,73.6 277.7,74.4 302.2,74.4 304.0,75.3 307.5,74.9 310.1,73.6 323.2,73.6 326.7,74.4 330.2,74.0 332.0,72.7" fill="none" stroke="#d6d6d6" stroke-width="1.1" stroke-opacity="1" stroke-linejoin="round"/><polyline points="0.0,69.5 4.2,69.6 9.5,71.8 15.2,75.7 20.9,73.1 24.4,71.4 34.0,70.9 38.4,69.2 47.1,69.2 51.5,70.9 56.7,70.9 62.0,68.7 67.2,69.2 71.6,70.9 77.7,72.2 81.2,71.4 85.6,69.2 95.2,69.2 98.4,70.5 106.2,70.5 111.5,68.7 115.9,68.7 120.2,69.6 123.7,69.6 127.2,71.8 130.7,71.4 133.4,70.1 146.5,70.1 150.0,69.2 155.2,69.2 157.0,70.5 259.0,70.5 261.6,72.2 267.7,72.2 271.2,70.5 277.7,71.4 290.0,71.4 290.9,70.5 302.2,70.5 304.0,72.2 310.1,71.8 332.0,72.2 333.7,71.4 346.0,72.2 349.5,70.1" fill="none" stroke="#ffffff" stroke-width="1.2" stroke-opacity="1" stroke-linejoin="round"/><polyline points="253.0,71.0 261.6,72.4 269.5,71.6" fill="none" stroke="#1a50e8" stroke-width="1.2" stroke-opacity="1" stroke-linejoin="round"/></svg>
<div class="t" style="left:300px;top:90.2px;width:103px;text-align:right;transform:scaleX(0.91);transform-origin:right center">6.0000</div>
<div class="a" style="left:405px;top:96px;width:6px;height:1px;background:#000"></div>
<div class="t" style="left:300px;top:113.2px;width:103px;text-align:right;transform:scaleX(0.91);transform-origin:right center">4.0000</div>
<div class="a" style="left:405px;top:119px;width:6px;height:1px;background:#000"></div>
<div class="t" style="left:300px;top:136.2px;width:103px;text-align:right;transform:scaleX(0.91);transform-origin:right center">2.0000</div>
<div class="a" style="left:405px;top:142px;width:6px;height:1px;background:#000"></div>
<div class="t" style="left:300px;top:159.2px;width:103px;text-align:right;transform:scaleX(0.91);transform-origin:right center">0.0000</div>
<div class="a" style="left:405px;top:165px;width:6px;height:1px;background:#000"></div>
<div class="t" style="left:300px;top:182.2px;width:103px;text-align:right;transform:scaleX(0.91);transform-origin:right center">-2.0000</div>
<div class="a" style="left:405px;top:188px;width:6px;height:1px;background:#000"></div>
<div class="t" style="left:300px;top:205.2px;width:103px;text-align:right;transform:scaleX(0.91);transform-origin:right center">-4.0000</div>
<div class="a" style="left:405px;top:211px;width:6px;height:1px;background:#000"></div>
<div class="t" style="left:300px;top:228.2px;width:103px;text-align:right;transform:scaleX(0.91);transform-origin:right center">-6.0000</div>
<div class="a" style="left:405px;top:234px;width:6px;height:1px;background:#000"></div>
<div class="a" style="left:411px;top:237px;width:1px;height:5px;background:#000"></div>
<div class="t" style="left:371.8px;top:243px;width:80px;text-align:center;transform:scaleX(0.91);">100.0</div>
<div class="a" style="left:560px;top:237px;width:1px;height:5px;background:#000"></div>
<div class="t" style="left:520.2px;top:243px;width:80px;text-align:center;transform:scaleX(0.91);">1000.0</div>
<div class="a" style="left:708px;top:237px;width:1px;height:5px;background:#000"></div>
<div class="t" style="left:668.0px;top:243px;width:80px;text-align:center;transform:scaleX(0.91);">10000.0</div>
<div class="a" style="left:779px;top:237px;width:1px;height:5px;background:#000"></div>
<div class="t" style="left:738.5px;top:243px;width:80px;text-align:center;transform:scaleX(0.91);">30000.0</div>
<div class="t" style="left:354px;top:165px;transform:translate(-50%,-50%) rotate(-90deg) scaleX(1.055)">Amplitude</div>
<div class="t" style="left:327.6px;top:262.0px;transform:scaleX(0.986);transform-origin:left center;">Delta Curve (out)</div>
<div class="t" style="left:564.9px;top:259.6px;transform:scaleX(0.968);transform-origin:left center;">Frequency</div>
<div class="a" style="left:803px;top:86px;width:315px;height:139px;border-top:1px solid #d6d6d6;border-bottom:1px solid #8a8a8a;background:linear-gradient(to right,#3a3a3a 0,#3a3a3a 1px,#dcdcdc 1px,#d2d2d2 14px,#c0c0c0 15px,#bfbfbf 300px,#8c8c8c 313px,#4a4a4a 315px)"></div>
<div class="t" style="left:820.0px;top:90.7px;transform:scaleX(0.961);transform-origin:left center;">FR - Delta Smoothed DUT Mic1</div>
<svg class="a" style="left:1075px;top:89px" width="29" height="19"><rect x="0" y="0" width="29" height="19" fill="#000"/><path d="M0.5 18.5V0.5H28.5" fill="none" stroke="#6a6a6a"/><path d="M28.5 0.5V18.5H0.5" fill="none" stroke="#e4e4e4"/><path d="M1.5 13.5L9.5 3L17.5 13.5L26 3" transform="translate(1,0)" fill="none" stroke="#ffffff" stroke-width="1"/></svg>
<div class="t" style="left:820.0px;top:113.7px;transform:scaleX(0.961);transform-origin:left center;">FR - Delta Smoothed DUT Mic2</div>
<svg class="a" style="left:1075px;top:112px" width="29" height="19"><rect x="0" y="0" width="29" height="19" fill="#000"/><path d="M0.5 18.5V0.5H28.5" fill="none" stroke="#6a6a6a"/><path d="M28.5 0.5V18.5H0.5" fill="none" stroke="#e4e4e4"/><path d="M1.5 13.5L9.5 3L17.5 13.5L26 3" transform="translate(1,0)" fill="none" stroke="#1f4fff" stroke-width="1"/></svg>
<div class="t" style="left:820.0px;top:136.7px;transform:scaleX(0.961);transform-origin:left center;">FR - Delta Smoothed DUT Mic3</div>
<svg class="a" style="left:1075px;top:135px" width="29" height="19"><rect x="0" y="0" width="29" height="19" fill="#000"/><path d="M0.5 18.5V0.5H28.5" fill="none" stroke="#6a6a6a"/><path d="M28.5 0.5V18.5H0.5" fill="none" stroke="#e4e4e4"/><path d="M1.5 13.5L9.5 3L17.5 13.5L26 3" transform="translate(1,0)" fill="none" stroke="#ffffff" stroke-width="1"/></svg>
<div class="t" style="left:820.0px;top:159.7px;transform:scaleX(0.961);transform-origin:left center;">FR - Delta Smoothed DUT Mic4</div>
<svg class="a" style="left:1075px;top:158px" width="29" height="19"><rect x="0" y="0" width="29" height="19" fill="#000"/><path d="M0.5 18.5V0.5H28.5" fill="none" stroke="#6a6a6a"/><path d="M28.5 0.5V18.5H0.5" fill="none" stroke="#e4e4e4"/><path d="M1.5 13.5L9.5 3L17.5 13.5L26 3" transform="translate(1,0)" fill="none" stroke="#3c9cff" stroke-width="1"/></svg>
<div class="t" style="left:820.0px;top:182.7px;transform:scaleX(0.993);transform-origin:left center;">Lim - Delta Smoothed DUT Mic1 Upper Limit</div>
<svg class="a" style="left:1075px;top:181px" width="29" height="19"><rect x="0" y="0" width="29" height="19" fill="#000"/><path d="M0.5 18.5V0.5H28.5" fill="none" stroke="#6a6a6a"/><path d="M28.5 0.5V18.5H0.5" fill="none" stroke="#e4e4e4"/><path d="M1.5 13L14 2.5L26 13" transform="translate(1,0)" fill="none" stroke="#ff0000" stroke-width="2"/></svg>
<div class="t" style="left:820.0px;top:205.7px;transform:scaleX(0.993);transform-origin:left center;">Lim - Delta Smoothed DUT Mic1 Lower Limit</div>
<svg class="a" style="left:1075px;top:204px" width="29" height="19"><rect x="0" y="0" width="29" height="19" fill="#000"/><path d="M0.5 18.5V0.5H28.5" fill="none" stroke="#6a6a6a"/><path d="M28.5 0.5V18.5H0.5" fill="none" stroke="#e4e4e4"/><path d="M1.5 13L14 2.5L26 13" transform="translate(1,0)" fill="none" stroke="#ff0000" stroke-width="2"/></svg>
<div class="t" style="left:608.0px;top:310.3px;transform:scaleX(0.996);transform-origin:left center;">Curve Name (out)</div>
<svg class="a" style="left:566.5px;top:323px;z-index:2" width="13.5" height="27" viewBox="0 0 12 26" preserveAspectRatio="none"><use href="#spin"/></svg>
<div class="a" style="left:579px;top:326px;width:28px;height:25px"><div class="b" style="border-color:rgba(0,0,0,0.0) rgba(255,255,255,0.42) rgba(255,255,255,0.3) rgba(0,0,0,0.02)"><div class="b" style="border-color:rgba(0,0,0,0.04) rgba(255,255,255,0.42) rgba(255,255,255,0.3) rgba(0,0,0,0.06)"><div class="b" style="border-color:rgba(0,0,0,0.08) rgba(255,255,255,0.42) rgba(255,255,255,0.3) rgba(0,0,0,0.1)"><div class="b" style="border-color:rgba(0,0,0,0.12) rgba(255,255,255,0.42) rgba(255,255,255,0.3) rgba(0,0,0,0.14)"><div class="f" style="background:#fafafa"></div></div></div></div></div></div>
<div class="t" style="left:584.9px;top:331.8px;transform:scaleX(0.91);transform-origin:left center;">0</div>
<div class="a" style="left:607px;top:326px;width:220px;height:133px"><div class="b" style="border-color:rgba(0,0,0,0.02) rgba(255,255,255,0.36) rgba(255,255,255,0.36) rgba(0,0,0,0.02)"><div class="b" style="border-color:rgba(0,0,0,0.09) rgba(255,255,255,0.36) rgba(255,255,255,0.36) rgba(0,0,0,0.09)"><div class="b" style="border-color:rgba(0,0,0,0.17) rgba(255,255,255,0.36) rgba(255,255,255,0.36) rgba(0,0,0,0.17)"><div class="b" style="border-color:rgba(0,0,0,0.25) rgba(255,255,255,0.36) rgba(255,255,255,0.36) rgba(0,0,0,0.25)"><div class="f" style="background:#b4b4b4"></div></div></div></div></div></div>
<div class="a" style="left:611px;top:330px;width:212px;height:25px"><div class="b" style="border-color:#a6a6a6 #b0b0b0 #b6b6b6 #a2a2a2"><div class="b" style="border-color:#939393 #adadad #b9b9b9 #909090"><div class="b" style="border-color:#808080 #acacac #b8b8b8 #808080"><div class="b" style="border-color:#707070 #aaaaaa #b0b0b0 #727272"><div class="f" style="background:#d3d3d3"></div></div></div></div></div></div>
<div class="t" style="left:616.5px;top:335.8px;transform:scaleX(0.961);transform-origin:left center;">FR - Delta Smoothed DUT Mic1</div>
<div class="a" style="left:611px;top:355px;width:212px;height:25px"><div class="b" style="border-color:#a6a6a6 #b0b0b0 #b6b6b6 #a2a2a2"><div class="b" style="border-color:#939393 #adadad #b9b9b9 #909090"><div class="b" style="border-color:#808080 #acacac #b8b8b8 #808080"><div class="b" style="border-color:#707070 #aaaaaa #b0b0b0 #727272"><div class="f" style="background:#d3d3d3"></div></div></div></div></div></div>
<div class="t" style="left:616.5px;top:360.8px;transform:scaleX(0.961);transform-origin:left center;">FR - Delta Smoothed DUT Mic2</div>
<div class="a" style="left:611px;top:380px;width:212px;height:25px"><div class="b" style="border-color:#a6a6a6 #b0b0b0 #b6b6b6 #a2a2a2"><div class="b" style="border-color:#939393 #adadad #b9b9b9 #909090"><div class="b" style="border-color:#808080 #acacac #b8b8b8 #808080"><div class="b" style="border-color:#707070 #aaaaaa #b0b0b0 #727272"><div class="f" style="background:#d3d3d3"></div></div></div></div></div></div>
<div class="t" style="left:616.5px;top:385.8px;transform:scaleX(0.961);transform-origin:left center;">FR - Delta Smoothed DUT Mic3</div>
<div class="a" style="left:611px;top:405px;width:212px;height:25px"><div class="b" style="border-color:#a6a6a6 #b0b0b0 #b6b6b6 #a2a2a2"><div class="b" style="border-color:#939393 #adadad #b9b9b9 #909090"><div class="b" style="border-color:#808080 #acacac #b8b8b8 #808080"><div class="b" style="border-color:#707070 #aaaaaa #b0b0b0 #727272"><div class="f" style="background:#d3d3d3"></div></div></div></div></div></div>
<div class="t" style="left:616.5px;top:410.8px;transform:scaleX(0.961);transform-origin:left center;">FR - Delta Smoothed DUT Mic4</div>
<div class="a" style="left:611px;top:430px;width:212px;height:25px"><div class="b" style="border-color:#a6a6a6 #b0b0b0 #b6b6b6 #a2a2a2"><div class="b" style="border-color:#939393 #adadad #b9b9b9 #909090"><div class="b" style="border-color:#808080 #acacac #b8b8b8 #808080"><div class="b" style="border-color:#707070 #aaaaaa #b0b0b0 #727272"><div class="f" style="background:#d3d3d3"></div></div></div></div></div></div>
<div class="t" style="left:616.5px;top:435.8px;transform:scaleX(0.986);transform-origin:left center;">Lim - Delta Smoothed DUT Mic1</div>
<div class="t" style="left:631.8px;top:478.7px;transform:scaleX(0.931);transform-origin:left center;">Results</div>
<svg class="a" style="left:589.5px;top:492px;z-index:2" width="13.5" height="27" viewBox="0 0 12 26" preserveAspectRatio="none"><use href="#spin"/></svg>
<div class="a" style="left:603px;top:495px;width:28px;height:25px"><div class="b" style="border-color:rgba(0,0,0,0.0) rgba(255,255,255,0.42) rgba(255,255,255,0.3) rgba(0,0,0,0.02)"><div class="b" style="border-color:rgba(0,0,0,0.04) rgba(255,255,255,0.42) rgba(255,255,255,0.3) rgba(0,0,0,0.06)"><div class="b" style="border-color:rgba(0,0,0,0.08) rgba(255,255,255,0.42) rgba(255,255,255,0.3) rgba(0,0,0,0.1)"><div class="b" style="border-color:rgba(0,0,0,0.12) rgba(255,255,255,0.42) rgba(255,255,255,0.3) rgba(0,0,0,0.14)"><div class="f" style="background:#fafafa"></div></div></div></div></div></div>
<div class="t" style="left:608.9px;top:500.8px;transform:scaleX(0.91);transform-origin:left center;">0</div>
<div class="a" style="left:631px;top:494px;width:116px;height:142px"><div class="b" style="border-color:rgba(0,0,0,0.02) rgba(255,255,255,0.36) rgba(255,255,255,0.36) rgba(0,0,0,0.02)"><div class="b" style="border-color:rgba(0,0,0,0.09) rgba(255,255,255,0.36) rgba(255,255,255,0.36) rgba(0,0,0,0.09)"><div class="b" style="border-color:rgba(0,0,0,0.17) rgba(255,255,255,0.36) rgba(255,255,255,0.36) rgba(0,0,0,0.17)"><div class="b" style="border-color:rgba(0,0,0,0.25) rgba(255,255,255,0.36) rgba(255,255,255,0.36) rgba(0,0,0,0.25)"><div class="b" style="background:#b4b4b4;border-color:rgba(0,0,0,.12) rgba(0,0,0,0.025) rgba(0,0,0,0.025) rgba(0,0,0,.12)"><div class="b" style="border-color:rgba(0,0,0,.2) rgba(0,0,0,0.025) rgba(0,0,0,0.025) rgba(0,0,0,.2)"><div class="b" style="border-color:rgba(0,0,0,.28) rgba(0,0,0,0.025) rgba(0,0,0,0.025) rgba(0,0,0,.28)"><div class="b" style="border-color:rgba(0,0,0,.37) rgba(0,0,0,0.025) rgba(0,0,0,0.025) rgba(0,0,0,.37)"><div class="f" style="background:#b4b4b4"></div></div></div></div></div></div></div></div></div></div>
<div class="t" style="left:640.2px;top:503.5px;transform:scaleX(1.006);transform-origin:left center;">Name</div>
<div class="a" style="left:639px;top:519px;width:100px;height:25px"><div class="b" style="border-color:#b0b0b0 #bcbcbc #bcbcbc #b0b0b0"><div class="b" style="border-color:#a2a2a2 #c2c2c2 #c2c2c2 #a2a2a2"><div class="b" style="border-color:#959595 #c0c0c0 #c0c0c0 #959595"><div class="b" style="border-color:#898989 #b2b2b2 #b2b2b2 #898989"><div class="f" style="background:#d3d3d3"></div></div></div></div></div></div>
<div class="t" style="left:644.3px;top:524.8px;transform:scaleX(0.995);transform-origin:left center;">Lim - Delta</div>
<div class="t" style="left:641.2px;top:545.7px;transform:scaleX(0.938);transform-origin:left center;">Type</div>
<div class="a" style="left:639px;top:561px;width:100px;height:25px"><div class="b" style="border-color:#b0b0b0 #bcbcbc #bcbcbc #b0b0b0"><div class="b" style="border-color:#a2a2a2 #c2c2c2 #c2c2c2 #a2a2a2"><div class="b" style="border-color:#959595 #c0c0c0 #c0c0c0 #959595"><div class="b" style="border-color:#898989 #b2b2b2 #b2b2b2 #898989"><div class="f" style="background:#d3d3d3"></div></div></div></div></div></div>
<div class="t" style="left:644.3px;top:566.8px;transform:scaleX(0.91);transform-origin:left center;">PassFailTest</div>
<div class="t" style="left:640.2px;top:587.9px;transform:scaleX(0.945);transform-origin:left center;">Result</div>
<div class="a" style="left:639px;top:603px;width:100px;height:25px"><div class="b" style="border-color:#b0b0b0 #bcbcbc #bcbcbc #b0b0b0"><div class="b" style="border-color:#a2a2a2 #c2c2c2 #c2c2c2 #a2a2a2"><div class="b" style="border-color:#959595 #c0c0c0 #c0c0c0 #959595"><div class="b" style="border-color:#898989 #b2b2b2 #b2b2b2 #898989"><div class="f" style="background:#d3d3d3"></div></div></div></div></div></div>
<div class="t" style="left:644.3px;top:608.8px;transform:scaleX(0.88);transform-origin:left center;">PASS</div>
</body></html>
